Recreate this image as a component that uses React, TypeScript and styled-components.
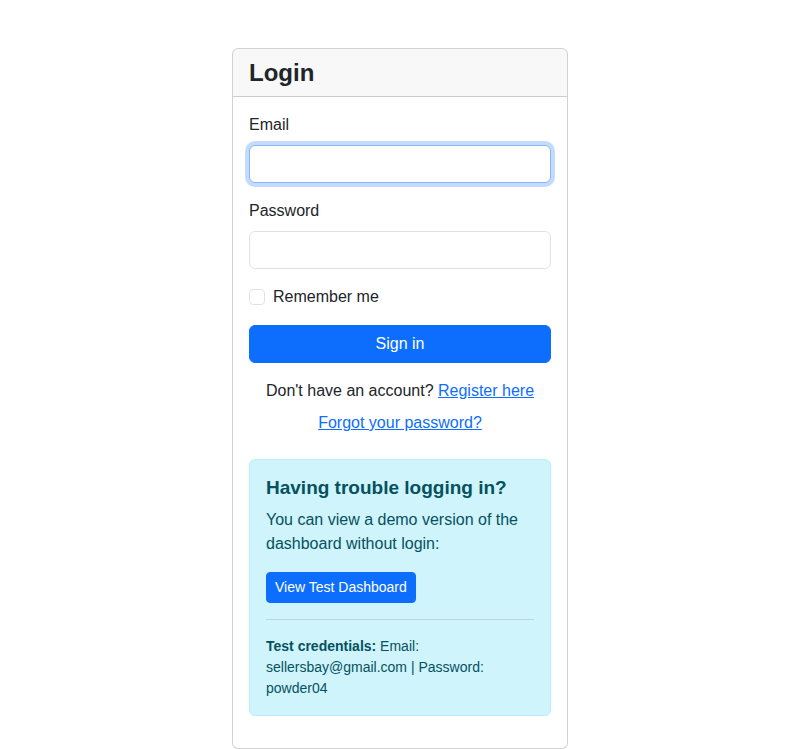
import React from 'react';
import styled, {createGlobalStyle} from "styled-components";

const GlobalStyle = createGlobalStyle`
  * { box-sizing: border-box; }
  body {
    margin: 0;
    font-family: "Segoe UI", "Liberation Sans", Arial, sans-serif;
    font-size: 16px;
    line-height: 1.5;
    color: #212529;
    background: #fff;
  }
`

const Container = styled.div`
  width: 720px;
  margin: 48px auto 0;
  padding: 0 12px;
  display: flex;
  justify-content: center;
`

const Card = styled.div`
  width: 336px;
  border: 1px solid rgba(0, 0, 0, 0.175);
  border-radius: 6px;
  background: #fff;
  overflow: hidden;
`

const CardHeader = styled.div`
  padding: 8px 16px;
  background: rgba(33, 37, 41, 0.03);
  border-bottom: 1px solid rgba(0, 0, 0, 0.175);

  h3 {
    margin: 0;
    font-size: 24px;
    font-weight: 700;
    line-height: 31px;
  }
`

const CardBody = styled.div`
  padding: 16px;
`

const Field = styled.div`
  margin-bottom: 16px;
`

const Label = styled.label`
  display: block;
  margin-bottom: 8px;
`

const Input = styled.input<{ $focused?: boolean }>`
  display: block;
  width: 100%;
  height: 38px;
  padding: 6px 12px;
  font: inherit;
  border: 1px solid ${p => p.$focused ? '#86b7fe' : '#dee2e6'};
  border-radius: 6px;
  box-shadow: ${p => p.$focused ? '0 0 0 4px rgba(13, 110, 253, 0.25)' : 'none'};
  outline: none;
`

const CheckRow = styled.div`
  display: flex;
  align-items: center;
  gap: 8px;
  margin-bottom: 16px;
  height: 24px;
`

const CheckBox = styled.span`
  width: 16px;
  height: 16px;
  border: 1px solid #dee2e6;
  border-radius: 4px;
  background: #fff;
`

const Button = styled.button<{ $small?: boolean }>`
  display: ${p => p.$small ? 'inline-block' : 'block'};
  width: ${p => p.$small ? 'auto' : '100%'};
  padding: ${p => p.$small ? '4px 8px' : '6px 12px'};
  font-family: inherit;
  font-size: ${p => p.$small ? '14px' : '16px'};
  line-height: 1.5;
  color: #fff;
  background: #0d6efd;
  border: 1px solid #0d6efd;
  border-radius: ${p => p.$small ? '4px' : '6px'};
`

const CenterText = styled.p<{ $top: number }>`
  margin: ${p => p.$top}px 0 0;
  text-align: center;

  a {
    color: #0d6efd;
    text-decoration: underline;
  }
`

const Alert = styled.div`
  margin-top: 24px;
  margin-bottom: 16px;
  padding: 16px;
  color: #055160;
  background: #cff4fc;
  border: 1px solid #b6effb;
  border-radius: 6px;

  h5 {
    margin: 0 0 8px;
    font-size: 19px;
    font-weight: 700;
    line-height: 24px;
  }

  p {
    margin: 0 0 16px;
  }

  hr {
    margin: 16px 0;
    border: 0;
    border-top: 1px solid currentColor;
    opacity: 0.25;
  }
`

const Small = styled.small`
  display: block;
  font-size: 14px;
  line-height: 1.5;
`

const App = () => {
    return (
        <>
            <GlobalStyle/>
            <Container>
                <Card>
                    <CardHeader><h3>Login</h3></CardHeader>
                    <CardBody>
                        <Field>
                            <Label>Email</Label>
                            <Input type="email" $focused/>
                        </Field>
                        <Field>
                            <Label>Password</Label>
                            <Input type="password"/>
                        </Field>
                        <CheckRow>
                            <CheckBox/>
                            <span>Remember me</span>
                        </CheckRow>
                        <Button>Sign in</Button>
                        <CenterText $top={16}>Don't have an account? <a href="#">Register here</a></CenterText>
                        <CenterText $top={8}><a href="#">Forgot your password?</a></CenterText>

                        <Alert>
                            <h5>Having trouble logging in?</h5>
                            <p>You can view a demo version of the dashboard without login:</p>
                            <Button $small>View Test Dashboard</Button>
                            <hr/>
                            <Small><strong>Test credentials:</strong> Email: sellersbay@gmail.com | Password: powder04</Small>
                        </Alert>
                    </CardBody>
                </Card>
            </Container>
        </>
    );
};

export default App;
